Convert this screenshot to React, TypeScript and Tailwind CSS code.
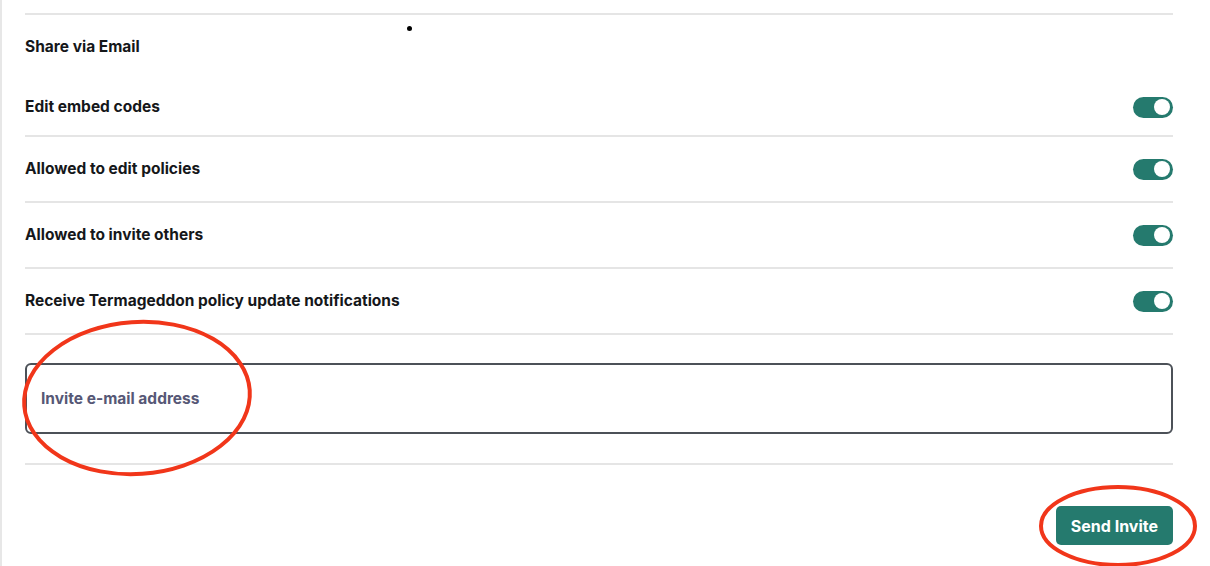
import React from 'react'

const rows = [
  { label: 'Edit embed codes', first: true },
  { label: 'Allowed to edit policies' },
  { label: 'Allowed to invite others' },
  { label: 'Receive Termageddon policy update notifications' },
]

const Toggle = () => (
  <div className="flex h-[21px] w-10 items-center justify-end rounded-full bg-[#257a6e] pr-[3px]">
    <div className="h-4 w-4 rounded-full bg-white" />
  </div>
)

export default function App() {
  return (
    <div
      className="relative h-[566px] w-[1210px] overflow-hidden bg-white text-[#15171a]"
      style={{ fontFamily: 'Inter, "Noto Sans", sans-serif' }}
    >
      <div className="flex h-full border-l-2 border-[#e7e7e7] pl-[23px] pr-[37px]">
        <div className="flex flex-1 flex-col">
          <div className="mt-[13px] border-t-2 border-[#e5e5e5]" />

          <div className="flex h-[64px] items-center">
            <h3 className="text-[15.5px] font-bold leading-6">Share via Email</h3>
          </div>

          {rows.map((r) => (
            <div
              key={r.label}
              className={`flex items-center justify-between border-b-2 border-[#e5e5e5] ${
                r.first ? 'h-[58px]' : 'h-[66px]'
              }`}
            >
              <span className="text-[15.5px] font-bold leading-6">{r.label}</span>
              <Toggle />
            </div>
          ))}

          <div className="mt-[28px] flex h-[71px] items-center rounded-[6px] border-2 border-[#4c5158] px-[14px]">
            <input
              className="w-full bg-transparent text-[15.5px] font-bold text-[#565876] outline-none placeholder:text-[#565876]"
              placeholder="Invite e-mail address"
            />
          </div>

          <div className="mt-[29px] border-t-2 border-[#e5e5e5]" />

          <div className="mt-[41px] flex justify-end">
            <button className="h-[39px] rounded-[5px] bg-[#257a6e] px-[15px] text-[16px] font-bold text-white">
              Send Invite
            </button>
          </div>
        </div>
      </div>

      {/* stray dot */}
      <div className="absolute left-[407px] top-[26px] h-[5px] w-[5px] rounded-full bg-black" />

      {/* annotation circles */}
      <svg className="pointer-events-none absolute left-0 top-0" width="1210" height="566">
        <ellipse
          cx="137"
          cy="398"
          rx="113"
          ry="76"
          transform="rotate(-4 137 398)"
          fill="none"
          stroke="#f1361a"
          strokeWidth="4"
        />
        <ellipse cx="1118" cy="526" rx="77" ry="39" fill="none" stroke="#f1361a" strokeWidth="4" />
      </svg>
    </div>
  )
}
